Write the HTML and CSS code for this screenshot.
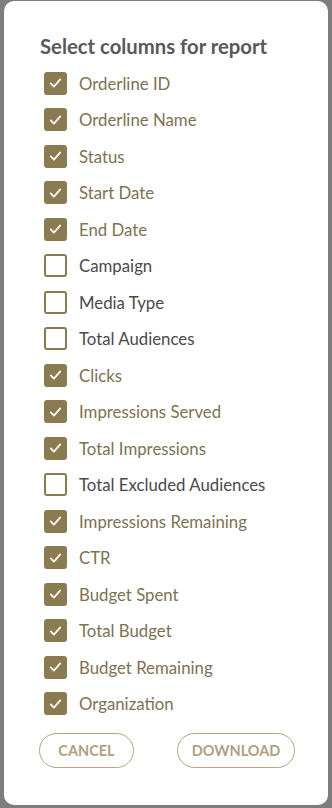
FILE: index.html
```html
<!DOCTYPE html>
<html>
<head>
<meta charset="utf-8">
<link rel="stylesheet" href="styles.css">
</head>
<body>
<div class="modal">
  <h1 class="title">Select columns for report</h1>
  <ul class="list">
    <li class="row on"><span class="box"><svg viewBox="0 0 24 24"><path d="M6 12.5l4 4 8-9"/></svg></span>Orderline ID</li>
    <li class="row on"><span class="box"><svg viewBox="0 0 24 24"><path d="M6 12.5l4 4 8-9"/></svg></span>Orderline Name</li>
    <li class="row on"><span class="box"><svg viewBox="0 0 24 24"><path d="M6 12.5l4 4 8-9"/></svg></span>Status</li>
    <li class="row on"><span class="box"><svg viewBox="0 0 24 24"><path d="M6 12.5l4 4 8-9"/></svg></span>Start Date</li>
    <li class="row on"><span class="box"><svg viewBox="0 0 24 24"><path d="M6 12.5l4 4 8-9"/></svg></span>End Date</li>
    <li class="row"><span class="box"></span>Campaign</li>
    <li class="row"><span class="box"></span>Media Type</li>
    <li class="row"><span class="box"></span>Total Audiences</li>
    <li class="row on"><span class="box"><svg viewBox="0 0 24 24"><path d="M6 12.5l4 4 8-9"/></svg></span>Clicks</li>
    <li class="row on"><span class="box"><svg viewBox="0 0 24 24"><path d="M6 12.5l4 4 8-9"/></svg></span>Impressions Served</li>
    <li class="row on"><span class="box"><svg viewBox="0 0 24 24"><path d="M6 12.5l4 4 8-9"/></svg></span>Total Impressions</li>
    <li class="row"><span class="box"></span>Total Excluded Audiences</li>
    <li class="row on"><span class="box"><svg viewBox="0 0 24 24"><path d="M6 12.5l4 4 8-9"/></svg></span>Impressions Remaining</li>
    <li class="row on"><span class="box"><svg viewBox="0 0 24 24"><path d="M6 12.5l4 4 8-9"/></svg></span>CTR</li>
    <li class="row on"><span class="box"><svg viewBox="0 0 24 24"><path d="M6 12.5l4 4 8-9"/></svg></span>Budget Spent</li>
    <li class="row on"><span class="box"><svg viewBox="0 0 24 24"><path d="M6 12.5l4 4 8-9"/></svg></span>Total Budget</li>
    <li class="row on"><span class="box"><svg viewBox="0 0 24 24"><path d="M6 12.5l4 4 8-9"/></svg></span>Budget Remaining</li>
    <li class="row on"><span class="box"><svg viewBox="0 0 24 24"><path d="M6 12.5l4 4 8-9"/></svg></span>Organization</li>
  </ul>
  <div class="actions">
    <button class="btn cancel">CANCEL</button>
    <button class="btn download">DOWNLOAD</button>
  </div>
</div>
</body>
</html>
```
FILE: styles.css
```css
html, body {
  margin: 0;
  padding: 0;
}
body {
  background: #7d7d7d;
  font-family: Lato, "Open Sans", sans-serif;
  width: 332px;
  height: 808px;
  overflow: hidden;
}
.modal {
  box-sizing: border-box;
  margin: 1px 4px 0 4px;
  width: 324px;
  height: 804px;
  background: #fff;
  border-radius: 10px;
  padding: 33px 0 0 36px;
}
.title {
  margin: 0;
  font-size: 20.3px;
  line-height: 24px;
  font-weight: 700;
  color: #595959;
}
.list {
  list-style: none;
  margin: 7px 0 0 0;
  padding: 0;
}
.row {
  height: 36.5px;
  display: flex;
  align-items: center;
  font-size: 16.8px;
  color: #4a4a4a;
}
.row.on {
  color: #7e7250;
}
.box {
  box-sizing: border-box;
  width: 23px;
  height: 23px;
  margin: 0 12px 0 4px;
  border: 2px solid #8a7c50;
  border-radius: 3px;
  display: flex;
  align-items: center;
  justify-content: center;
  flex: none;
}
.on .box {
  background: #8a7c50;
}
.box svg {
  width: 20px;
  height: 20px;
  fill: none;
  stroke: #fff;
  stroke-width: 2.2;
  stroke-linecap: round;
  stroke-linejoin: round;
}
.actions {
  display: flex;
  gap: 43px;
  margin-top: 11px;
  margin-left: -1px;
}
.btn {
  box-sizing: border-box;
  height: 35px;
  border: 1px solid #b2a781;
  border-radius: 18px;
  background: #fff;
  color: #aea27c;
  font-family: Lato, "Open Sans", sans-serif;
  font-weight: 700;
  font-size: 14.5px;
  padding: 0;
}
.cancel { width: 95px; }
.download { width: 118px; }
```
